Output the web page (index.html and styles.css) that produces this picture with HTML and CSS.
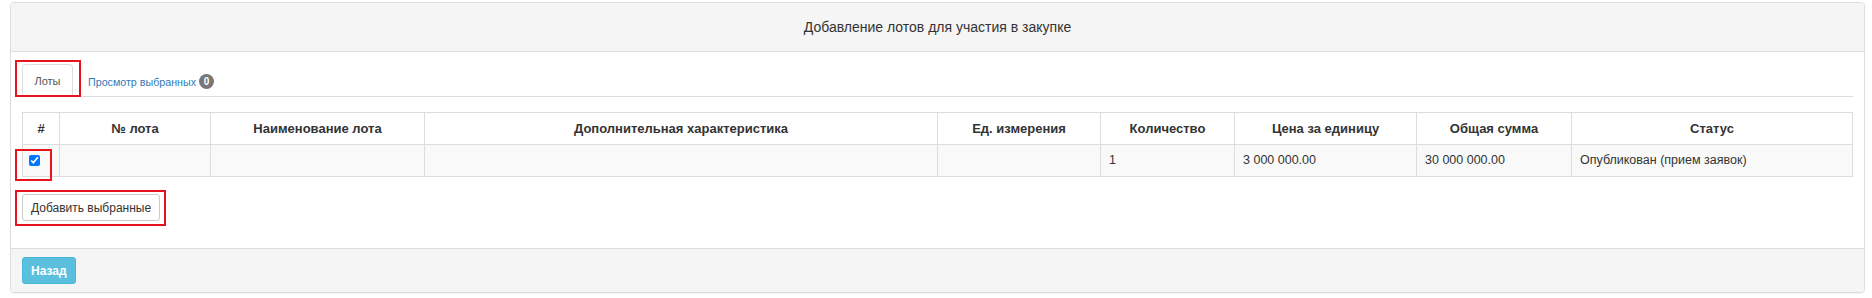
FILE: index.html
```html
<!DOCTYPE html>
<html lang="ru">
<head>
  <meta charset="UTF-8" />
  <title>Добавление лотов для участия в закупке</title>
  <link rel="stylesheet" href="styles.css">
</head>
<body>
  <div class="panel">
    <div class="panel-heading">Добавление лотов для участия в закупке</div>

    <div class="panel-body">
      <!-- Tabs -->
      <ul class="nav-tabs">
        <li class="tab active">
          <a href="#">Лоты</a>
          <span class="mark mark-tab"></span>
        </li>
        <li class="tab">
          <a href="#">Просмотр выбранных</a><span class="badge">0</span>
        </li>
      </ul>

      <table class="lots">
        <colgroup>
          <col style="width:37px">
          <col style="width:151px">
          <col style="width:214px">
          <col style="width:513px">
          <col style="width:163px">
          <col style="width:134px">
          <col style="width:182px">
          <col style="width:155px">
          <col style="width:281px">
        </colgroup>
        <thead>
          <tr>
            <th>#</th>
            <th>№ лота</th>
            <th>Наименование лота</th>
            <th>Дополнительная характеристика</th>
            <th>Ед. измерения</th>
            <th>Количество</th>
            <th>Цена за единицу</th>
            <th>Общая сумма</th>
            <th>Статус</th>
          </tr>
        </thead>
        <tbody>
          <tr>
            <td class="check-cell">
              <input type="checkbox" checked>
              <span class="mark mark-check"></span>
            </td>
            <td></td>
            <td></td>
            <td></td>
            <td></td>
            <td>1</td>
            <td>3 000 000.00</td>
            <td>30 000 000.00</td>
            <td>Опубликован (прием заявок)</td>
          </tr>
        </tbody>
      </table>

      <div class="actions">
        <button class="btn btn-default">Добавить выбранные</button>
        <span class="mark mark-btn"></span>
      </div>
    </div>

    <div class="panel-footer">
      <button class="btn btn-info">Назад</button>
    </div>
  </div>
</body>
</html>
```

FILE: styles.css
```css
body {
  margin: 0;
  padding: 2px 7px 5px 10px;
  font-family: "Liberation Sans", Arial, sans-serif;
  font-size: 12px;
  color: #333;
  background: #fff;
}

.panel {
  border: 1px solid #ddd;
  border-radius: 4px;
  box-shadow: 0 1px 1px rgba(0,0,0,0.05);
}

.panel-heading {
  background: #f5f5f5;
  border-bottom: 1px solid #ddd;
  border-radius: 3px 3px 0 0;
  padding: 15px;
  height: 18px;
  line-height: 18px;
  font-size: 14px;
  text-align: center;
}

.panel-body {
  padding: 13px 11px 27px 11px;
}

/* tabs */
.nav-tabs {
  list-style: none;
  margin: 0 0 15px 0;
  padding: 0;
  display: flex;
  align-items: flex-end;
  border-bottom: 1px solid #ddd;
  height: 31px;
}

.tab {
  position: relative;
  height: 31px;
  margin-bottom: -1px;
  display: flex;
  align-items: center;
}

.tab a {
  font-size: 10.7px;
  color: #337ab7;
  text-decoration: none;
  padding: 0 3px 0 15px;
}

.tab.active {
  border: 1px solid #ddd;
  border-bottom-color: #fff;
  border-radius: 4px 4px 0 0;
  background: #fff;
  width: 49px;
  justify-content: center;
}

.tab.active a {
  font-size: 11px;
  color: #555;
  padding: 0;
}

.badge {
  display: inline-block;
  width: 15px;
  height: 15px;
  line-height: 15px;
  border-radius: 50%;
  background: #777;
  color: #fff;
  font-size: 10px;
  font-weight: bold;
  text-align: center;
}

/* table */
.lots {
  width: 1830px;
  table-layout: fixed;
  border-collapse: collapse;
}

.lots th,
.lots td {
  border: 1px solid #ddd;
  padding: 7px 8px;
  line-height: 17px;
  height: 17px;
}

.lots th {
  font-size: 13px;
  font-weight: bold;
  text-align: center;
}

.lots td {
  font-size: 12.5px;
  color: #333;
  background: #f9f9f9;
}

.lots td.check-cell {
  position: relative;
  padding-left: 6px;
}

.check-cell input {
  width: 11px;
  height: 11px;
  margin: 0;
  display: block;
}

/* buttons */
.actions {
  position: relative;
  margin-top: 17px;
  height: 27px;
}

.btn {
  font-family: "Liberation Sans", Arial, sans-serif;
  font-size: 12px;
  height: 27px;
  padding: 0 8px;
  border-radius: 3px;
  border: 1px solid #ccc;
  white-space: nowrap;
  cursor: pointer;
}

.btn-default {
  background: #fff;
  color: #333;
}

.btn-info {
  background: #5bc0de;
  border-color: #46b8da;
  color: #fff;
  font-weight: bold;
}

.panel-footer {
  background: #f5f5f5;
  border-top: 1px solid #ddd;
  border-radius: 0 0 3px 3px;
  padding: 8px 11px;
}

/* red annotation frames */
.mark {
  position: absolute;
  border: 2px solid #e8141b;
  pointer-events: none;
}

.mark-tab {
  left: -8px;
  top: -5px;
  width: 62px;
  height: 33px;
}

.mark-check {
  left: -8px;
  top: 4px;
  width: 33px;
  height: 28px;
}

.mark-btn {
  left: -7px;
  top: -4px;
  width: 147px;
  height: 32px;
}
```
